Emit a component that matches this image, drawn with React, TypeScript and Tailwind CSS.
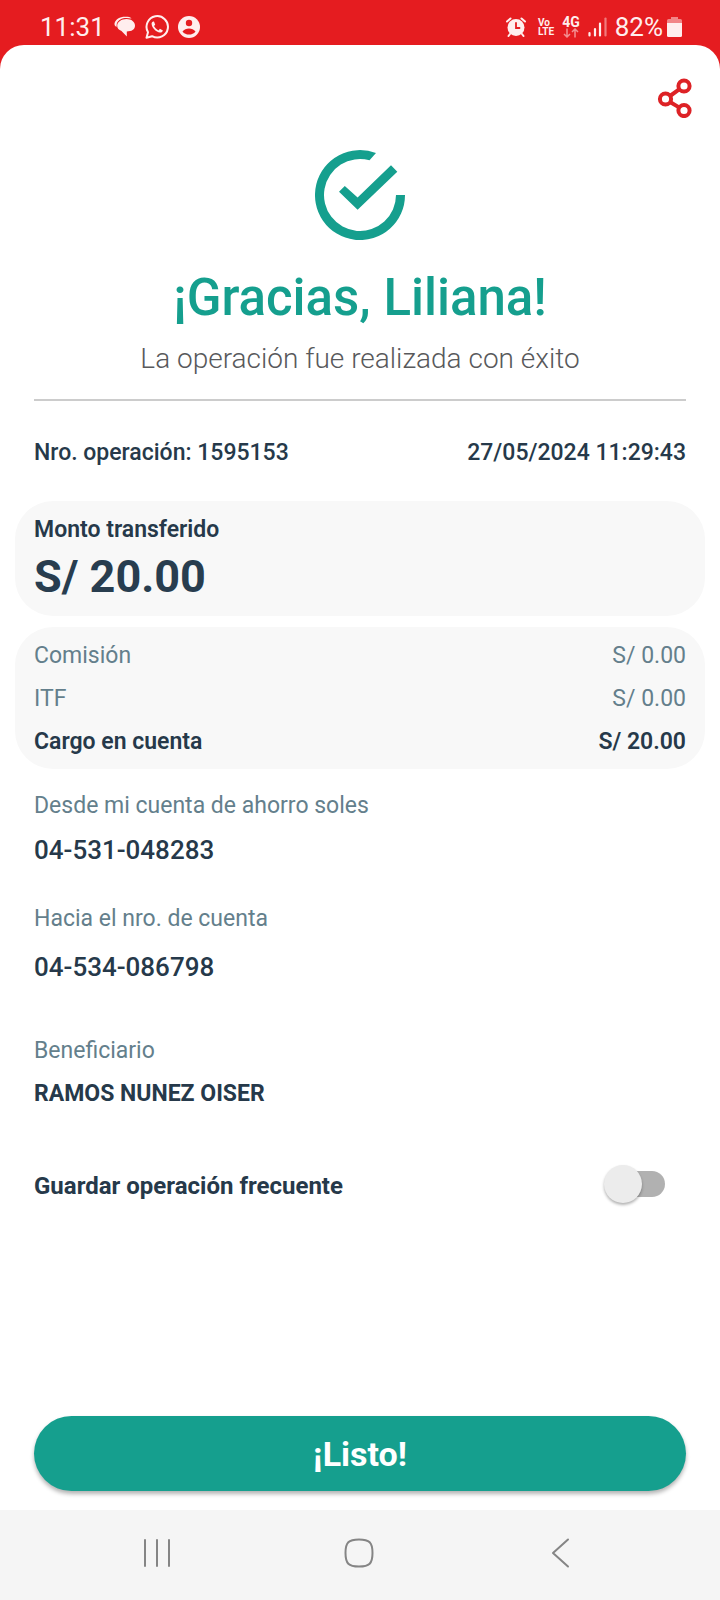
import React, { useState } from "react";

type Row = { label: string; value: string; strong?: boolean };

const charges: Row[] = [
  { label: "Comisión", value: "S/ 0.00" },
  { label: "ITF", value: "S/ 0.00" },
  { label: "Cargo en cuenta", value: "S/ 20.00", strong: true },
];

function StatusBar() {
  return (
    <header className="flex h-[45px] items-center justify-between pt-2 pr-[38px] pl-10 text-[#ffeeee]">
      <div className="flex items-center gap-2">
        <time className="text-[26px] leading-8">11:31</time>
        <svg className="h-6 w-6" viewBox="0 0 24 24" fill="currentColor" aria-hidden="true">
          <path d="M1.500 8.500C2.500 3.500 8 1 14.500 1.800C17 2.200 18 3 18.500 3.600C11 2 5.500 4 3.800 8.500L3.500 12C2 11 1.300 10 1.500 8.500Z" />
          <path d="M13.500 4C18.500 4 22 6.800 22 10.800C22 14.500 18.500 16.500 13.800 16.500V21.500L8.500 16C5.800 15 4.200 13.200 4.200 10.800C4.200 6.800 8.500 4 13.500 4Z" />
        </svg>
        <svg className="h-6 w-6" viewBox="0 0 24 24" fill="none" stroke="currentColor" strokeWidth="2" aria-hidden="true">
          <path d="M1.500 22.700L3 17.200A10.700 10.700 0 1 1 7.100 21.200Z" strokeLinejoin="round" />
          <path d="M8.400 6.500C7.400 6.600 6.500 7.600 6.600 9C7 13 11 17 15 17.600C16.500 17.700 17.700 16.800 17.900 15.500L14.900 13.800L13.500 15.400C11.500 14.600 9.900 13 9 11.100L10.200 9.700L9 6.600Z" fill="currentColor" stroke="none" />
        </svg>
        <svg className="h-6 w-6" viewBox="0 0 24 24" aria-hidden="true">
          <circle cx="12" cy="12" r="11" fill="currentColor" />
          <circle cx="12" cy="8" r="3.200" fill="#e51c20" />
          <path d="M5.500 16.500C7 14.200 9.500 13.400 12 13.400C14.500 13.400 17 14.200 18.500 16.500C17 18.700 14.500 19.600 12 19.600C9.500 19.600 7 18.700 5.500 16.500Z" fill="#e51c20" />
        </svg>
      </div>
      <div className="flex items-center gap-2">
        <svg className="h-5 w-5" viewBox="0 0 20 20" fill="none" stroke="currentColor" strokeLinecap="round" aria-hidden="true">
          <circle cx="10" cy="10.500" r="8.500" fill="currentColor" stroke="none" />
          <path d="M1 4.500L4.500 1.500M19 4.500L15.500 1.500M4 17L2.500 19M16 17L17.500 19" strokeWidth="2" />
          <path d="M10 6V11H13.500" stroke="#e51c20" strokeWidth="1.800" />
        </svg>
        <span className="ml-1 flex flex-col text-[10px] leading-[9px] font-bold">
          <span>Vo</span>
          <span>LTE</span>
        </span>
        <span className="flex flex-col items-center">
          <span className="text-[14px] leading-3 font-bold">4G</span>
          <svg className="h-[10px] w-4" viewBox="0 0 16 10" fill="none" stroke="currentColor" strokeWidth="1.500" opacity="0.55" aria-hidden="true">
            <path d="M4 0.500V9M1 6L4 9L7 6M12 9.500V1M9 4L12 1L15 4" />
          </svg>
        </span>
        <svg className="h-5 w-[19px]" viewBox="0 0 19 20" fill="none" stroke="currentColor" strokeWidth="2.200" strokeLinecap="round" aria-hidden="true">
          <path d="M1.500 16V18.500M7 12V18.500M12 6.500V18.500" />
          <path d="M17.500 1.500V18.500" opacity="0.45" />
        </svg>
        <span className="flex items-center gap-1">
          <span className="text-[26px] leading-8">82%</span>
          <svg className="h-5 w-[15px]" viewBox="0 0 15 20" fill="currentColor" aria-hidden="true">
            <path d="M4 0H11V2H13.500Q15 2 15 3.500V7H0V3.500Q0 2 1.500 2H4Z" opacity="0.5" />
            <path d="M0 6H15V18.500Q15 20 13.500 20H1.500Q0 20 0 18.500Z" />
          </svg>
        </span>
      </div>
    </header>
  );
}

function NavBar() {
  return (
    <nav className="flex h-[90px] items-center justify-between bg-[#f5f5f5] pt-1 pr-[144px] pb-2 pl-[141px] text-[#858585]">
      <button type="button" aria-label="Recientes">
        <svg className="h-[30px] w-[30px]" viewBox="0 0 30 30" fill="none" stroke="currentColor" strokeWidth="2" strokeLinecap="round">
          <path d="M4 2V28M16 2V28M28 2V28" />
        </svg>
      </button>
      <button type="button" aria-label="Inicio">
        <svg className="h-[30px] w-[30px]" viewBox="0 0 30 30" fill="none" stroke="currentColor" strokeWidth="2">
          <path d="M15 1.500C25.500 1.500 28.500 4.500 28.500 15C28.500 25.500 25.500 28.500 15 28.500C4.500 28.500 1.500 25.500 1.500 15C1.500 4.500 4.500 1.500 15 1.500Z" />
        </svg>
      </button>
      <button type="button" aria-label="Atrás">
        <svg className="h-[30px] w-[30px]" viewBox="0 0 30 30" fill="none" stroke="currentColor" strokeWidth="2" strokeLinecap="round" strokeLinejoin="round">
          <path d="M22 1.500L7 15L22 28.500" />
        </svg>
      </button>
    </nav>
  );
}

export default function App() {
  const [saved, setSaved] = useState(false);

  return (
    <div className="flex min-h-screen flex-col bg-[#e51c20] font-['Roboto',sans-serif]">
      <StatusBar />
      <main className="flex flex-1 flex-col rounded-t-3xl bg-white text-[23px] leading-7 text-[#26394a]">
        <div className="flex justify-end pt-[33px] pr-[27px]">
          <button type="button" aria-label="Compartir" className="text-[#dd2226]">
            <svg className="h-10 w-9" viewBox="0 0 36 40" fill="none" stroke="currentColor" strokeWidth="4">
              <circle cx="8.500" cy="21" r="5.600" />
              <circle cx="27" cy="8" r="5.600" />
              <circle cx="27" cy="32.500" r="5.600" />
              <path d="M13 18L22.500 11.200M13 24L22.500 29.600" />
            </svg>
          </button>
        </div>

        <section className="flex flex-col items-center text-center">
          <svg className="mt-8 h-[90px] w-[90px]" viewBox="0 0 90 90" fill="#159f8e" aria-hidden="true">
            <path d="M61 3A45 45 0 1 0 90 45H81A36 36 0 1 1 54.500 10.300Z" />
            <path d="M24 41.700L29.800 36L42.600 47.500L76 15.300L82.300 21.700L42.600 59.700Z" />
          </svg>
          <h1 className="mt-7 text-[51px] leading-[60px] font-medium text-[#159f8e]">¡Gracias, Liliana!</h1>
          <p className="mt-[15px] text-[28px] leading-8 font-light text-[#58595b]">La operación fue realizada con éxito</p>
        </section>

        <hr className="mx-[34px] mt-6 border-t-2 border-[#cccccc]" />

        <div className="mt-[38px] flex justify-between px-[34px] font-medium">
          <p>Nro. operación: 1595153</p>
          <time>27/05/2024 11:29:43</time>
        </div>

        <section className="mx-[15px] mt-[34px] rounded-[38px] bg-[#f8f8f8] px-[19px] pt-[15px] pb-[13px]">
          <h2 className="font-semibold">Monto transferido</h2>
          <p className="mt-[7px] text-[45px] leading-[52px] font-bold text-[#283d4f]">S/ 20.00</p>
        </section>

        <dl className="mx-[15px] mt-[11px] flex flex-col gap-[15px] rounded-[38px] bg-[#f8f8f8] px-[19px] pt-[15px] pb-[13px]">
          {charges.map((row) => (
            <div
              key={row.label}
              className={row.strong ? "flex justify-between font-semibold" : "flex justify-between text-[#647f8c]"}
            >
              <dt>{row.label}</dt>
              <dd>{row.value}</dd>
            </div>
          ))}
        </dl>

        <dl className="px-[34px]">
          <dt className="mt-[23px] text-[#647f8c]">Desde mi cuenta de ahorro soles</dt>
          <dd className="mt-[14px] text-[26px] leading-8 font-medium">04-531-048283</dd>
          <dt className="mt-[39px] text-[#647f8c]">Hacia el nro. de cuenta</dt>
          <dd className="mt-[18px] text-[26px] leading-8 font-medium">04-534-086798</dd>
          <dt className="mt-[54px] text-[#647f8c]">Beneficiario</dt>
          <dd className="mt-[15px] font-bold">RAMOS NUNEZ OISER</dd>
        </dl>

        <label className="mt-[57px] flex items-center justify-between pr-[55px] pl-[34px] text-[24px] font-bold">
          <span className="pt-1">Guardar operación frecuente</span>
          <span className="relative flex h-[38px] w-[61px] items-center justify-end">
            <input
              type="checkbox"
              role="switch"
              checked={saved}
              onChange={(e) => setSaved(e.target.checked)}
              className="peer h-[26px] w-[52px] appearance-none rounded-full bg-[#b1b1b1] checked:bg-[#8acfc6]"
            />
            <span className="pointer-events-none absolute top-0 left-0 h-[38px] w-[38px] rounded-full bg-[#ececec] shadow-[0_2px_3px_rgba(0,0,0,0.3)] peer-checked:left-6 peer-checked:bg-[#159f8e]" />
          </span>
        </label>

        <div className="mt-auto px-[34px] pt-8 pb-[19px]">
          <button
            type="button"
            className="h-[75px] w-full rounded-full bg-[#159f8e] text-[34px] leading-10 font-bold text-white shadow-[0_3px_4px_rgba(0,0,0,0.3)]"
          >
            ¡Listo!
          </button>
        </div>
      </main>
      <NavBar />
    </div>
  );
}
